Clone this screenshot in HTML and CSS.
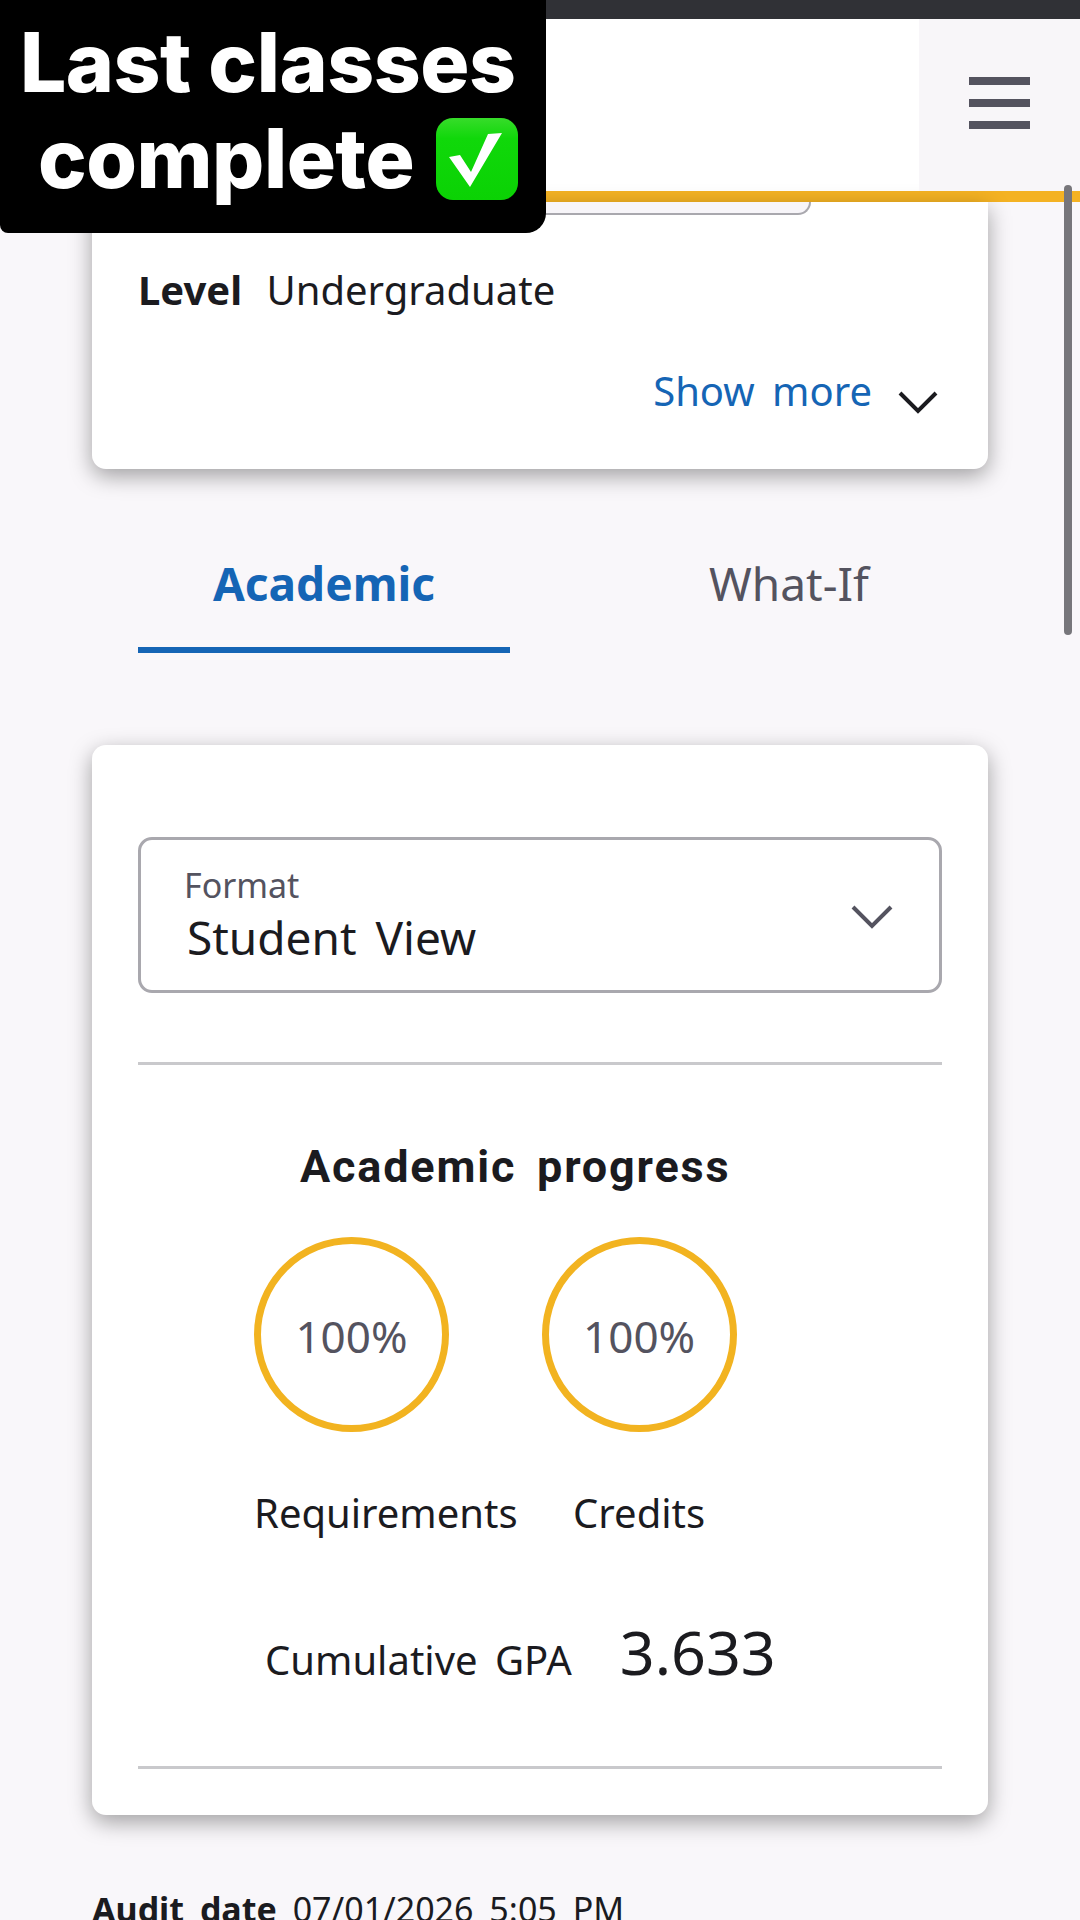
FILE: index.html
```html
<!DOCTYPE html>
<html lang="en">
<head>
    <meta charset="UTF-8">
    <meta name="viewport" content="width=device-width, initial-scale=1.0">
    <title>Academic progress</title>
    <link rel="stylesheet" href="styles.css">
</head>
<body>
    <div class="status-strip"></div>

    <header class="site-header">
        <div class="header-logo"></div>
        <button class="menu-button" aria-label="Menu">
            <span class="menu-line"></span>
            <span class="menu-line"></span>
            <span class="menu-line"></span>
        </button>
    </header>

    <main class="content">
        <section class="card student-card">
            <div class="student-stub"></div>
            <p class="info-row"><b class="info-name">Level</b> Undergraduate</p>
            <div class="show-more">
                <span>Show more</span>
                <svg class="show-more-icon" viewBox="0 0 40 24" width="40" height="24">
                    <path d="M2 3 L20 21 L38 3" fill="none" stroke="#1b1b1f" stroke-width="4"/>
                </svg>
            </div>
        </section>

        <nav class="tabs">
            <a class="tab tab-active">Academic</a>
            <a class="tab">What-If</a>
        </nav>

        <section class="card audit-card">
            <div class="format-select">
                <div class="format-text">
                    <div class="format-label">Format</div>
                    <div class="format-value">Student View</div>
                </div>
                <svg class="format-icon" viewBox="0 0 42 24" width="42" height="24">
                    <path d="M2 2 L21 21 L40 2" fill="none" stroke="#54535f" stroke-width="4"/>
                </svg>
            </div>

            <hr class="divider divider-first">

            <h2 class="progress-title">Academic progress</h2>
            <div class="progress-row">
                <div class="progress-item">
                    <div class="ring">100%</div>
                    <div class="progress-label">Requirements</div>
                </div>
                <div class="progress-item progress-item-center">
                    <div class="ring">100%</div>
                    <div class="progress-label">Credits</div>
                </div>
            </div>

            <div class="gpa-row">
                <span class="gpa-label">Cumulative GPA</span>
                <span class="gpa-value">3.633</span>
            </div>

            <hr class="divider divider-last">
        </section>

        <p class="audit-date"><b>Audit date</b> 07/01/2026 5:05 PM</p>
    </main>

    <!-- caption and scrollbar sit on top of the page -->
    <div class="caption">
        <div class="caption-first">Last classes</div>
        <div class="caption-second">complete
            <svg class="caption-check" viewBox="0 0 82 82" width="82" height="82">
                <defs>
                    <linearGradient id="checkGreen" x1="0" y1="0" x2="0" y2="1">
                        <stop offset="0" stop-color="#37dc2a"/>
                        <stop offset="0.25" stop-color="#10d80a"/>
                        <stop offset="1" stop-color="#0bd204"/>
                    </linearGradient>
                </defs>
                <rect x="0" y="0" width="82" height="82" rx="17" fill="url(#checkGreen)"/>
                <path d="M13 39 L24 37 L35 54 L52 16 L66 15 L34 69 Z" fill="#fff"/>
            </svg>
        </div>
    </div>
    <div class="scroll-thumb"></div>
</body>
</html>
```

FILE: styles.css
```css
* {
    box-sizing: border-box;
}

html, body {
    height: 1920px;
    overflow: hidden;
}

body {
    margin: 0;
    position: relative;
    background: #f9f7fa;
    color: #1b1b1f;
    font-family: "Noto Sans", "Open Sans", sans-serif;
    word-spacing: 7px;
}

.status-strip {
    height: 19px;
    background: #303136;
}

.site-header {
    display: flex;
    height: 183px;
    border-bottom: 11px solid #f4b223;
    background: #fff;
}

.header-logo {
    flex: 1;
}

.menu-button {
    width: 161px;
    padding: 0 50px 5px 50px;
    border: 0;
    background: #f8f6f9;
    display: flex;
    flex-direction: column;
    justify-content: center;
    gap: 14px;
}

.menu-line {
    display: block;
    height: 8px;
    background: #54535f;
}

.content {
    padding: 0 92px;
}

.card {
    background: #fff;
    border-radius: 14px;
    box-shadow: 0 7px 22px rgba(0, 0, 0, 0.36);
    padding: 0 46px;
}

.student-card {
    height: 267px;
    border-top-left-radius: 0;
    border-top-right-radius: 0;
}

.student-stub {
    width: 673px;
    height: 13px;
    background: #f7f5f9;
    border: 2px solid #a9a8ae;
    border-top: 0;
    border-radius: 0 0 14px 14px;
}

.info-row {
    margin: 50px 0 0;
    font-size: 40px;
    line-height: 50px;
}

.info-name {
    margin-right: 7px;
}

.show-more {
    display: flex;
    justify-content: flex-end;
    align-items: flex-start;
    gap: 26px;
    margin-top: 51px;
    padding-right: 4px;
    font-size: 40px;
    line-height: 50px;
    color: #1565b5;
}

.show-more-icon {
    margin-top: 24px;
}

.tabs {
    display: flex;
    gap: 93px;
    margin: 84px 0 92px 46px;
}

.tab {
    width: 372px;
    padding-bottom: 34px;
    border-bottom: 6px solid transparent;
    font-size: 46px;
    line-height: 60px;
    text-align: center;
    color: #54535f;
}

.tab-active {
    border-bottom-color: #1565b5;
    color: #1565b5;
    font-weight: 700;
}

.audit-card {
    height: 1070px;
    padding-top: 92px;
}

.format-select {
    display: flex;
    align-items: center;
    justify-content: space-between;
    height: 156px;
    padding: 0 46px 0 43px;
    border: 3px solid #a9a8ae;
    border-radius: 14px;
}

.format-label {
    font-size: 34px;
    line-height: 40px;
    color: #54535f;
}

.format-value {
    margin-top: 4px;
    margin-left: 3px;
    font-size: 46px;
    line-height: 56px;
}

.format-icon {
    margin-top: 4px;
}

.divider {
    height: 3px;
    margin: 0;
    border: 0;
    background: #c9c9cc;
}

.divider-first {
    margin-top: 69px;
}

.divider-last {
    margin-top: 74px;
}

.progress-title {
    margin: 77px 0 0 162px;
    font-family: Roboto, sans-serif;
    font-size: 45px;
    line-height: 50px;
    font-weight: 700;
    letter-spacing: 1.8px;
    word-spacing: 8px;
}

.progress-row {
    display: flex;
    gap: 24px;
    margin: 45px 0 0 116px;
}

.progress-item-center {
    display: flex;
    flex-direction: column;
    align-items: center;
}

.ring {
    display: flex;
    align-items: center;
    justify-content: center;
    width: 195px;
    height: 195px;
    padding-top: 2px;
    border: 7px solid #f2b320;
    border-radius: 50%;
    font-size: 44px;
    color: #54535f;
}

.progress-label {
    margin-top: 56px;
    font-size: 40px;
    line-height: 50px;
}

.gpa-row {
    display: flex;
    align-items: baseline;
    gap: 48px;
    margin: 74px 0 0 127px;
}

.gpa-label {
    font-size: 40px;
    line-height: 50px;
}

.gpa-value {
    font-size: 61px;
    line-height: 80px;
}

.audit-date {
    margin: 72px 0 0;
    font-size: 34px;
    line-height: 44px;
}

.caption {
    position: absolute;
    top: 0;
    left: 0;
    width: 546px;
    height: 233px;
    padding-top: 15px;
    background: #000;
    border-radius: 0 0 20px 8px;
    color: #fff;
    font-family: Inter, sans-serif;
    font-size: 82px;
    font-weight: 800;
    letter-spacing: -0.5px;
    line-height: 96px;
    word-spacing: 0;
}

.caption-first {
    padding-left: 20px;
}

.caption-second {
    display: flex;
    align-items: center;
    gap: 22px;
    padding-left: 38px;
}

.scroll-thumb {
    position: absolute;
    top: 185px;
    right: 8px;
    width: 8px;
    height: 450px;
    border-radius: 4px;
    background: #77767b;
}
```
